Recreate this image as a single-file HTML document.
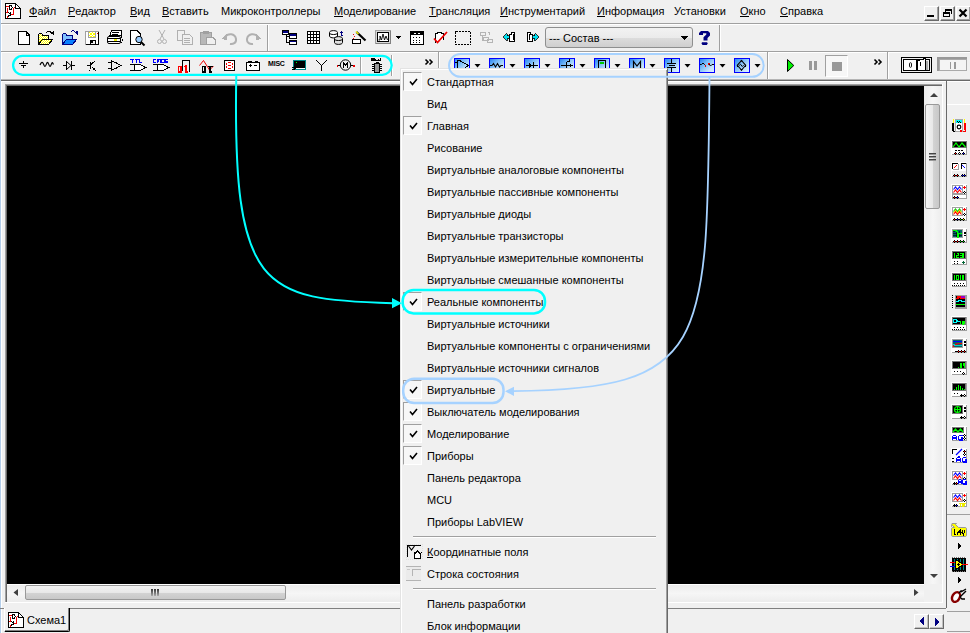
<!DOCTYPE html><html><head><meta charset="utf-8"><style>
*{margin:0;padding:0;box-sizing:border-box}
html,body{width:970px;height:633px;overflow:hidden;background:#f0f0f0;font-family:"Liberation Sans",sans-serif;font-size:11px;color:#000}
.a{position:absolute}
svg{position:absolute;overflow:visible}
.t{position:absolute;white-space:nowrap;line-height:13px}
u{text-decoration:none;position:relative}
u:after{content:"";position:absolute;left:0;right:0;bottom:0px;height:1px;background:#000}
.mdib{position:absolute;top:6px;width:15px;height:15px;background:#f0f0f0;border-top:1px solid #fff;border-left:1px solid #fff;border-right:1px solid #696969;border-bottom:1px solid #696969;box-shadow:inset -1px -1px 0 #a0a0a0}
.mi{position:absolute;left:427px;white-space:nowrap;line-height:13px}
.ck{position:absolute;left:403px;width:19px;height:19px;background:#f7f7f7;border-top:1px solid #a0a0a0;border-left:1px solid #a0a0a0;border-right:1px solid #fff;border-bottom:1px solid #fff}
.vb{position:absolute;top:58px;width:16px;height:15px;border:1px solid #0000ff;background:linear-gradient(135deg,#2a86f0 0%,#80c0f8 40%,#c8e4fc 75%,#dcf0ff 100%)}
</style></head><body>
<div class="a" style="left:0px;top:0px;width:1px;height:633px;background:#b4ceea;"></div>
<div class="a" style="left:1px;top:0px;width:1px;height:633px;background:#fff;"></div>
<svg style="left:5px;top:3px" width="17" height="17" viewBox="0 0 17 17" shape-rendering="crispEdges"><path d="M0.5 0.5H10.5L15.5 5.5V15.5H0.5Z" fill="#fff" stroke="#000"/><path d="M10.5 0.5V5.5H15.5" fill="none" stroke="#000"/><path d="M1 3.5H3.5M2.5 5V9.5H1M8.5 4.5H10M8.5 4.5V11.5H6" fill="none" stroke="#e00"/><path d="M4.5 2.5H6L7.5 4.5L6 6.5H4.5Z" fill="none" stroke="#000"/><path d="M3.5 9.5L6.5 12.5M5.5 9V13M3 13.5L4.5 12" fill="none" stroke="#000"/><path d="M2.5 13V15" stroke="#e00"/></svg>
<div class="t" style="left:29px;top:5px;"><u>Ф</u>айл</div>
<div class="t" style="left:68px;top:5px;"><u>Р</u>едактор</div>
<div class="t" style="left:130px;top:5px;"><u>В</u>ид</div>
<div class="t" style="left:162px;top:5px;"><u>В</u>ставить</div>
<div class="t" style="left:221px;top:5px;">Микроконтроллеры</div>
<div class="t" style="left:334px;top:5px;"><u>М</u>оделирование</div>
<div class="t" style="left:429px;top:5px;"><u>Т</u>рансляция</div>
<div class="t" style="left:500px;top:5px;"><u>И</u>нструментарий</div>
<div class="t" style="left:597px;top:5px;"><u>И</u>нформация</div>
<div class="t" style="left:674px;top:5px;">Установки</div>
<div class="t" style="left:740px;top:5px;"><u>О</u>кно</div>
<div class="t" style="left:780px;top:5px;"><u>С</u>правка</div>
<div class="mdib" style="left:924px"></div>
<div class="mdib" style="left:940px"></div>
<div class="mdib" style="left:956px"></div>
<svg style="left:924px;top:6px" width="15" height="15" viewBox="0 0 15 15" shape-rendering="crispEdges"><rect x="3" y="9" width="7" height="2" fill="#000"/></svg>
<svg style="left:940px;top:6px" width="15" height="15" viewBox="0 0 15 15" shape-rendering="crispEdges"><path d="M5.5 3.5H11.5V7.5M5.5 3.5V5.5" fill="none" stroke="#000"/><rect x="5" y="3" width="7" height="2" fill="#000"/><rect x="3.5" y="6.5" width="6" height="4" fill="none" stroke="#000"/><rect x="3" y="6" width="7" height="2" fill="#000"/></svg>
<svg style="left:956px;top:6px" width="15" height="15" viewBox="0 0 15 15" shape-rendering="crispEdges"><path d="M3.5 3.5L10.5 10.5M10.5 3.5L3.5 10.5" stroke="#000" stroke-width="2.2" shape-rendering="auto"/></svg>
<div class="a" style="left:1px;top:23px;width:969px;height:1px;background:#a0a0a0;"></div>
<div class="a" style="left:1px;top:24px;width:969px;height:1px;background:#fff;"></div>
<div class="a" style="left:1px;top:51px;width:969px;height:1px;background:#a0a0a0;"></div>
<div class="a" style="left:1px;top:52px;width:969px;height:1px;background:#fff;"></div>
<svg style="left:18px;top:31px" width="12" height="14" viewBox="0 0 12 14" shape-rendering="crispEdges"><path d="M0.5 0.5H8L11.5 4V13.5H0.5Z" fill="#fff" stroke="#000"/><path d="M8 1V4H11" fill="none" stroke="#000"/></svg>
<svg style="left:38px;top:30px" width="17" height="16" viewBox="0 0 17 16" shape-rendering="crispEdges"><defs><pattern id="chk" width="2" height="2" patternUnits="userSpaceOnUse"><rect width="2" height="2" fill="#fff"/><rect width="1" height="1" fill="#ff0"/><rect x="1" y="1" width="1" height="1" fill="#ff0"/></pattern></defs><path d="M0.5 14V4.5L1.5 3.5H3.5L4.5 5H10.5V9" fill="url(#chk)" stroke="#000"/><path d="M0.5 14.5L4.5 9H15L10.5 14.5Z" fill="url(#chk)" stroke="#000"/><path d="M0 14.5H11" stroke="#000" stroke-width="1.2"/><path d="M8.5 3C9.5 0.8 11.5 0.5 13 2.5" fill="none" stroke="#000"/><path d="M12 2.5L16 1V5.5Z" fill="#000"/></svg>
<svg style="left:62px;top:30px" width="17" height="16" viewBox="0 0 17 16" shape-rendering="crispEdges"><path d="M0.5 14V4.5L1.5 3.5H3.5L4.5 5H10.5V9" fill="#80c0ff" stroke="#000080"/><path d="M0.5 14.5L4.5 9H15L10.5 14.5Z" fill="#0a80ff" stroke="#000080"/><path d="M0 14.5H11" stroke="#000080" stroke-width="1.2"/><path d="M8.5 2.5C9.5 0.3 11.5 0 13 2" fill="none" stroke="#000080"/><path d="M12 2L16 1V5Z" fill="#000080"/></svg>
<svg style="left:85px;top:31px" width="15" height="14" viewBox="0 0 15 14" shape-rendering="crispEdges"><defs><pattern id="stp" width="3" height="3" patternUnits="userSpaceOnUse"><rect width="3" height="3" fill="#fff"/><path d="M0 0H1V1H0ZM1 1H2V2H1ZM2 2H3V3H2ZM2 0H3V1H2ZM0 2H1V3H0Z" fill="#ff0"/></pattern></defs><rect x="0.5" y="0.5" width="13" height="13" fill="#fff" stroke="#a0a0a0"/><path d="M13.5 1V13.5H1" fill="none" stroke="#000" stroke-width="1.5"/><rect x="3.5" y="0.5" width="7" height="6" fill="url(#stp)" stroke="#a0a0a0"/><rect x="12" y="2" width="1" height="1" fill="#e00"/><rect x="5" y="9" width="5" height="4" fill="#f0f0f0" stroke="#000"/><rect x="6" y="10" width="2" height="2" fill="#000"/></svg>
<svg style="left:107px;top:30px" width="16" height="15" viewBox="0 0 16 15" shape-rendering="crispEdges"><path d="M4.5 0.5H14V5.5H3L3.5 3Z" fill="#fff" stroke="#000"/><path d="M5 2.5H12M5 4H11" stroke="#000"/><rect x="0.5" y="6.5" width="13" height="7" rx="1.5" fill="#fff" stroke="#000" shape-rendering="auto"/><path d="M1 8.5H13M1 11.5H13" stroke="#000"/><rect x="7" y="9" width="3" height="1.5" fill="#ee0"/><path d="M14 6V8M15 9V11M14 12V13" stroke="#000"/></svg>
<svg style="left:130px;top:30px" width="16" height="16" viewBox="0 0 16 16" shape-rendering="crispEdges"><path d="M0.5 0.5H7L10.5 4V14.5H0.5Z" fill="#fff" stroke="#000"/><circle cx="9" cy="9.5" r="3.2" fill="#9cf" stroke="#000" shape-rendering="auto"/><path d="M11 12L14.5 15.5" stroke="#000" stroke-width="2" shape-rendering="auto"/></svg>
<svg style="left:157px;top:30px" width="10" height="15" viewBox="0 0 10 15" shape-rendering="crispEdges"><path d="M2 0L7 9M8 0L3 9" stroke="#b0b0b0" shape-rendering="auto"/><circle cx="2.5" cy="11.5" r="2" fill="none" stroke="#b0b0b0" shape-rendering="auto"/><circle cx="7.5" cy="11.5" r="2" fill="none" stroke="#b0b0b0" shape-rendering="auto"/></svg>
<svg style="left:177px;top:30px" width="16" height="15" viewBox="0 0 16 15" shape-rendering="crispEdges"><path d="M0.5 0.5H7.5V10.5H0.5Z" fill="#f0f0f0" stroke="#b0b0b0"/><path d="M5.5 4.5H12.5L15.5 7.5V14.5H5.5Z" fill="#f0f0f0" stroke="#b0b0b0"/><path d="M7 8H13M7 10H13M7 12H13" stroke="#b0b0b0"/></svg>
<svg style="left:200px;top:30px" width="16" height="15" viewBox="0 0 16 15" shape-rendering="crispEdges"><rect x="0.5" y="2.5" width="11" height="12" fill="#b8b8b8" stroke="#a0a0a0"/><rect x="3" y="1" width="6" height="3" fill="#a0a0a0"/><path d="M6.5 7.5H13L15.5 10V14.5H6.5Z" fill="#f0f0f0" stroke="#a0a0a0"/></svg>
<svg style="left:221px;top:31px" width="17" height="14" viewBox="0 0 17 14" shape-rendering="crispEdges"><path d="M4 6C7 2 14 2 15 8C15.5 12 12 13.5 9 13" fill="none" stroke="#b0b0b0" stroke-width="2" shape-rendering="auto"/><path d="M0 8L6 3V9Z" fill="#b0b0b0"/></svg>
<svg style="left:245px;top:31px" width="17" height="14" viewBox="0 0 17 14" shape-rendering="crispEdges"><path d="M13 6C10 2 3 2 2 8C1.5 12 5 13.5 8 13" fill="none" stroke="#b0b0b0" stroke-width="2" shape-rendering="auto"/><path d="M17 8L11 3V9Z" fill="#b0b0b0"/></svg>
<div class="a" style="left:267px;top:25px;width:1px;height:26px;background:#a0a0a0;"></div>
<div class="a" style="left:268px;top:25px;width:1px;height:26px;background:#fff;"></div>
<svg style="left:282px;top:30px" width="16" height="16" viewBox="0 0 16 16" shape-rendering="crispEdges"><path d="M4.5 5V12.5H8M4.5 6.5H8" fill="none" stroke="#000"/><rect x="0.5" y="0.5" width="6" height="4" fill="#fff" stroke="#000"/><rect x="1" y="1" width="5" height="1.5" fill="#000080"/><rect x="7.5" y="3.5" width="6.5" height="4.5" fill="#fff" stroke="#000"/><rect x="8" y="4" width="5.5" height="1.5" fill="#000080"/><rect x="7.5" y="10" width="6.5" height="4.5" fill="#fff" stroke="#000"/><rect x="8" y="10.5" width="5.5" height="1.5" fill="#000080"/></svg>
<svg style="left:307px;top:31px" width="14" height="14" viewBox="0 0 14 14" shape-rendering="crispEdges"><rect x="0" y="0" width="13" height="13" fill="#000"/><path d="M1 1H3V3H1ZM4 1H6V3H4ZM7 1H9V3H7ZM10 1H12V3H10ZM1 4H3V6H1ZM4 4H6V6H4ZM7 4H9V6H7ZM10 4H12V6H10ZM1 7H3V9H1ZM4 7H6V9H4ZM7 7H9V9H7ZM10 7H12V9H10ZM1 10H3V12H1ZM4 10H6V12H4ZM7 10H9V12H7ZM10 10H12V12H10Z" fill="#fff"/></svg>
<svg style="left:329px;top:30px" width="16" height="16" viewBox="0 0 16 16" shape-rendering="crispEdges"><path d="M0.5 2.5C0.5 0 8.5 0 8.5 2.5V6C8.5 8.5 0.5 8.5 0.5 6Z" fill="#fff" stroke="#000" shape-rendering="auto"/><path d="M0.5 3C0.5 5 8.5 5 8.5 3" fill="none" stroke="#000" shape-rendering="auto"/><path d="M5.5 8.5C5.5 6 13.5 6 13.5 8.5V12.5C13.5 15 5.5 15 5.5 12.5Z" fill="#e0e0e0" stroke="#000" shape-rendering="auto"/><path d="M5.5 9C5.5 11 13.5 11 13.5 9" fill="none" stroke="#000" shape-rendering="auto"/><path d="M12.5 1.5V5.5H14" fill="none" stroke="#000080" stroke-width="1.2"/><path d="M10.5 3L12.5 0.5L14.5 3Z" fill="#000080"/></svg>
<svg style="left:352px;top:30px" width="15" height="15" viewBox="0 0 15 15" shape-rendering="crispEdges"><path d="M1 4H2M2 6H3M1 8H2" stroke="#e00"/><rect x="0.5" y="9.5" width="8" height="4" fill="#fff" stroke="#000"/><path d="M4.5 2L13.5 10.5" stroke="#000" stroke-width="2.2" shape-rendering="auto"/><path d="M4 1.5L6.5 4" stroke="#ee0" stroke-width="1.5" shape-rendering="auto"/></svg>
<svg style="left:375px;top:30px" width="16" height="14" viewBox="0 0 16 14" shape-rendering="crispEdges"><rect x="0.5" y="0.5" width="15" height="13" fill="#d8d8d8" stroke="#a0a0a0"/><path d="M1 13.5H16M15.5 1V14" stroke="#808080"/><rect x="2.5" y="2.5" width="11" height="9" fill="#fff" stroke="#000"/><path d="M3.5 10H5V6L6.5 10L8 4L9.5 10L11 6L12.5 10" fill="none" stroke="#000" stroke-width="0.9" shape-rendering="auto"/></svg>
<svg style="left:395px;top:36px" width="6" height="3" viewBox="0 0 6 3" shape-rendering="crispEdges"><path d="M0 0H6L3 3Z" fill="#000"/></svg>
<svg style="left:410px;top:31px" width="14" height="14" viewBox="0 0 14 14" shape-rendering="crispEdges"><rect x="0.5" y="0.5" width="13" height="12.5" fill="#fff" stroke="#000"/><path d="M13.5 1V13.5H1" fill="none" stroke="#000" stroke-width="1.5"/><rect x="1" y="1" width="12" height="3" fill="#000"/><path d="M4 2.5H6M8 2.5H10" stroke="#fff"/><path d="M3.5 6V7M6.5 6V7M9.5 6V7M3.5 8.5V9.5M6.5 8.5V9.5M9.5 8.5V9.5M3.5 11V12M6.5 11V12M9.5 11V12" stroke="#000"/></svg>
<svg style="left:433px;top:31px" width="15" height="14" viewBox="0 0 15 14" shape-rendering="crispEdges"><path d="M2.5 12V2.5H4V1H8V2.5H10V9" fill="#fff" stroke="#000"/><path d="M1 7.5L4.5 11.5L14 1" fill="none" stroke="#e00" stroke-width="1.8" shape-rendering="auto"/></svg>
<svg style="left:455px;top:31px" width="16" height="14" viewBox="0 0 16 14" shape-rendering="crispEdges"><rect x="0.5" y="0.5" width="15" height="13" fill="none" stroke="#000" stroke-dasharray="2 1"/></svg>
<svg style="left:480px;top:32px" width="13" height="11" viewBox="0 0 13 11" shape-rendering="crispEdges"><path d="M0.5 0.5H5.5V3.5H0.5Z" fill="none" stroke="#b4b4b4"/><path d="M2.5 4V8H5M7.5 0.5H9.5V2.5M3 5.5H8.5V8.5H3ZM7.5 7.5H12.5V10.5H7.5Z" fill="none" stroke="#b4b4b4"/></svg>
<svg style="left:503px;top:32px" width="12" height="10" viewBox="0 0 12 10" shape-rendering="crispEdges"><path d="M0 5L4 1.5V3.5H6.5V6.5H4V8.5Z" fill="#00e0f0" stroke="#000" stroke-width="0.8"/><path d="M6.5 2.5H8.5V0.5H11.5V9.5H6.5Z" fill="#fff" stroke="#000"/><path d="M10 2V8" stroke="#000"/></svg>
<svg style="left:527px;top:32px" width="12" height="10" viewBox="0 0 12 10" shape-rendering="crispEdges"><path d="M0.5 0.5H3.5V2.5H5.5V9.5H0.5Z" fill="#fff" stroke="#000"/><path d="M2 2V8" stroke="#000"/><path d="M11.5 5L7.5 1.5V3.5H5V6.5H7.5V8.5Z" fill="#00e0f0" stroke="#000" stroke-width="0.8"/></svg>
<div class="a" style="left:545px;top:27px;width:148px;height:21px;border:1px solid #8e8f8f;border-radius:3px;background:linear-gradient(#f2f2f2 0%,#ebebeb 50%,#dddddd 51%,#cfcfcf 100%)"></div>
<div class="t" style="left:549px;top:32px;">--- Состав ---</div>
<svg style="left:681px;top:36px" width="7" height="4" viewBox="0 0 7 4" shape-rendering="crispEdges"><path d="M0 0H7L3.5 4Z" fill="#000"/></svg>
<svg style="left:0;top:0" width="720" height="50" viewBox="0 0 720 50"><path d="M699 35V33L701 31H708L710 33V35.5L707.5 38V40.5H703.5V37.2L706.3 34.5V33.3H703V35Z" fill="#000080"/><path d="M702 42.3H707L707.8 43.5L706.8 45H702.5L701.5 43.5Z" fill="#000080"/></svg>
<div class="a" style="left:719px;top:25px;width:1px;height:26px;background:#a0a0a0;"></div>
<div class="a" style="left:720px;top:25px;width:1px;height:26px;background:#fff;"></div>
<div class="a" style="left:360px;top:57px;width:1px;height:17px;background:#a0a0a0;"></div>
<div class="a" style="left:361px;top:57px;width:1px;height:17px;background:#fff;"></div>
<div class="a" style="left:391px;top:55px;width:1px;height:21px;background:#a0a0a0;"></div>
<div class="a" style="left:392px;top:55px;width:1px;height:21px;background:#fff;"></div>
<div class="a" style="left:438px;top:52px;width:1px;height:30px;background:#a0a0a0;"></div>
<div class="a" style="left:439px;top:52px;width:1px;height:30px;background:#fff;"></div>
<div class="a" style="left:767px;top:52px;width:1px;height:30px;background:#a0a0a0;"></div>
<div class="a" style="left:768px;top:52px;width:1px;height:30px;background:#fff;"></div>
<div class="a" style="left:887px;top:52px;width:1px;height:30px;background:#a0a0a0;"></div>
<div class="a" style="left:888px;top:52px;width:1px;height:30px;background:#fff;"></div>
<svg style="left:425px;top:59px" width="9" height="6" viewBox="0 0 9 6" shape-rendering="crispEdges"><path d="M0.5 0.5L3 3L0.5 5.5M4.5 0.5L7 3L4.5 5.5" fill="none" stroke="#000" stroke-width="1.6" shape-rendering="auto"/></svg>
<svg style="left:874px;top:59px" width="9" height="6" viewBox="0 0 9 6" shape-rendering="crispEdges"><path d="M0.5 0.5L3 3L0.5 5.5M4.5 0.5L7 3L4.5 5.5" fill="none" stroke="#000" stroke-width="1.6" shape-rendering="auto"/></svg>
<svg style="left:0;top:0" width="970" height="90" viewBox="0 0 970 90" shape-rendering="crispEdges">
<path d="M19 63.5H28M21 65.5H26M23.5 61V63M23.5 66V68" stroke="#000" fill="none"/>
<path d="M40 65C41 63 41.5 62 42.5 62.5C43.5 63 44 66.5 45 66.5C46 66.5 46.5 62.3 47.5 62.3C48.5 62.3 49 66.5 50 66.5C51 66.5 51.5 62.5 52.3 62.5C52.8 62.5 53 64 53.5 64.5" fill="none" stroke="#000" stroke-width="1.2" shape-rendering="auto"/>
<path d="M63 65.5H66M71 65.5H75M66.5 61V70M71.5 61V70" fill="none" stroke="#000"/><path d="M66.5 61.5L71 65.5L66.5 69.5" fill="none" stroke="#000" shape-rendering="auto"/>
<path d="M87 65.5H90M90.5 62V69M91 64.5L95 61M92 67L95.5 70.5" fill="none" stroke="#000"/>
<path d="M95.5 70.5L92.5 69.5L94.5 67.5Z" fill="#000"/><rect x="89" y="70" width="1" height="1" fill="#000"/>
<path d="M108 62.5H111M108 68.5H111M111.5 60V71M112 61L121 65.5L112 70M121 65.5H122M116.5 62V64M116.5 67V69" fill="none" stroke="#000"/>
<path d="M130 64.5H134M130 70.5H134M134.5 64.5H140L145.5 67.5L140 70.5H134.5Z" fill="#fff" stroke="#000"/>
<path d="M153 64.5H157M153 70.5H157M157.5 64.5H163L168.5 67.5L163 70.5H157.5Z" fill="#fff" stroke="#000"/>
<path d="M182.5 71V60.5H189.5V71.5" fill="none" stroke="#000"/>
<path d="M199.5 65.5L203.5 60.5L209.5 70L213.5 66" fill="none" stroke="#e00" shape-rendering="auto"/>
<rect x="224.5" y="60.5" width="10" height="10" fill="#fff" stroke="#000"/>
<path d="M228 62.5H231M228 65.5H231M228 68.5H231M226.5 63V65M232.5 63V65M226.5 66V68M232.5 66V68" stroke="#e00"/>
<rect x="246.5" y="62.5" width="13" height="8" fill="#fff" stroke="#000"/><path d="M248 61.5H252M255 61.5H258M249 65.5H252M250.5 64V67M254 65.5H257" stroke="#000"/>
<rect x="293.5" y="60.5" width="12" height="9" fill="#000" stroke="#088"/><rect x="296" y="62" width="1" height="1" fill="#0f0"/><path d="M296 68.5H305" stroke="#fff"/><path d="M292 67.5H294M292 69.5H295" stroke="#000"/>
<path d="M316 60L321.5 65.5L327 60M321.5 65V71" fill="none" stroke="#000" stroke-width="1.1"/>
<circle cx="345.5" cy="65" r="5.2" fill="none" stroke="#000" shape-rendering="auto"/><path d="M337 65.5H340M351 65.5H354M343.5 68V62.5L345.5 65L347.5 62.5V68" fill="none" stroke="#000"/>
<rect x="336.5" y="64.5" width="1.5" height="2" fill="#e00"/><rect x="353" y="64.5" width="1.5" height="2" fill="#e00"/>
<path d="M371.5 61V58.5H374.5V61M373 58.5V60.5M375.5 58.5V60.5H377.5M378.5 58.5V60.5H380.5V58" fill="none" stroke="#000" stroke-width="1.2"/><rect x="374.5" y="63.5" width="5" height="9" fill="#999" stroke="#000"/><path d="M376 62.5H378.5" stroke="#000"/>
<path d="M372 64.5H374M372 66.5H374M372 68.5H374M372 70.5H374M380 64.5H382M380 66.5H382M380 68.5H382M380 70.5H382" stroke="#000"/>
</svg>
<svg style="left:0;top:0" width="400" height="80" viewBox="0 0 400 80" shape-rendering="crispEdges"><path d="M130 59.5H134M132 60V63M134.5 59.5H138.5M136.5 60V63M139.5 59V62.5H142" fill="none" stroke="#00f"/><path d="M156 59.5H153.5V62.5H156M157 63V59.5H160V63M158.5 60V62M161.5 59.5H164V62.5H161.5ZM168 59.5H165.5V61H167.5V62.5H165" fill="none" stroke="#00f"/><path d="M178.5 66.5H181V72H178.5Z" fill="none" stroke="#f00" stroke-width="1.6"/><path d="M184.5 67L186 66V72M184.5 72H188" fill="none" stroke="#f00" stroke-width="1.6"/><path d="M202.5 66.5H205V72H202.5Z" fill="none" stroke="#000" stroke-width="1.6"/><path d="M207.5 66.5H212.5M210 66.5V72M208.5 72H211.5" fill="none" stroke="#000" stroke-width="1.6"/></svg>
<div class="t" style="left:268px;top:59px;font-size:7px;font-weight:bold;letter-spacing:-0.2px;line-height:9px">MISC</div>
<div class="vb" style="left:454px"></div>
<svg style="left:454px;top:58px" width="16" height="15" viewBox="0 0 16 15" shape-rendering="crispEdges"><path d="M3.5 2V15M1 4.5H3.5M4 2.5H5.5L14.5 7.5M10 10.5L14.5 7.5M13 7.5H15" fill="none" stroke="#000"/></svg>
<svg style="left:474px;top:64px" width="7" height="4" viewBox="0 0 7 4" shape-rendering="crispEdges"><path d="M0.5 0H6.5L3.5 3.5Z" fill="#000" shape-rendering="auto"/></svg>
<div class="vb" style="left:489px"></div>
<svg style="left:489px;top:58px" width="16" height="15" viewBox="0 0 16 15" shape-rendering="crispEdges"><path d="M1 7.5H3L4.5 5.5L6.5 9L8.5 5.5L10.5 9L12 7.5H14" fill="none" stroke="#000" stroke-width="1.1" shape-rendering="auto"/></svg>
<svg style="left:509px;top:64px" width="7" height="4" viewBox="0 0 7 4" shape-rendering="crispEdges"><path d="M0.5 0H6.5L3.5 3.5Z" fill="#000" shape-rendering="auto"/></svg>
<div class="vb" style="left:524px"></div>
<svg style="left:524px;top:58px" width="16" height="15" viewBox="0 0 16 15" shape-rendering="crispEdges"><path d="M2 7.5H14M9.5 4V14" stroke="#000"/><path d="M4.5 4.5L8.5 7.5L4.5 10.5Z" fill="#000"/></svg>
<svg style="left:544px;top:64px" width="7" height="4" viewBox="0 0 7 4" shape-rendering="crispEdges"><path d="M0.5 0H6.5L3.5 3.5Z" fill="#000" shape-rendering="auto"/></svg>
<div class="vb" style="left:559px"></div>
<svg style="left:559px;top:58px" width="16" height="15" viewBox="0 0 16 15" shape-rendering="crispEdges"><path d="M2 7.5H14M7.5 4V14M7.5 3.5H10.5M10.5 1V4" stroke="#000" fill="none"/><path d="M12 5.5L9 7.5L12 9.5Z" fill="#000"/></svg>
<svg style="left:579px;top:64px" width="7" height="4" viewBox="0 0 7 4" shape-rendering="crispEdges"><path d="M0.5 0H6.5L3.5 3.5Z" fill="#000" shape-rendering="auto"/></svg>
<div class="vb" style="left:594px"></div>
<svg style="left:594px;top:58px" width="16" height="15" viewBox="0 0 16 15" shape-rendering="crispEdges"><rect x="4.5" y="2.5" width="7" height="10" fill="none" stroke="#000"/><rect x="6" y="4" width="4" height="2" fill="#0c0"/><path d="M6 10H7M9 10H10" stroke="#000"/></svg>
<svg style="left:614px;top:64px" width="7" height="4" viewBox="0 0 7 4" shape-rendering="crispEdges"><path d="M0.5 0H6.5L3.5 3.5Z" fill="#000" shape-rendering="auto"/></svg>
<div class="vb" style="left:629px"></div>
<svg style="left:629px;top:58px" width="16" height="15" viewBox="0 0 16 15" shape-rendering="crispEdges"><path d="M4.5 12V3.5L8 8L11.5 3.5V12" fill="none" stroke="#000" stroke-width="1.2" shape-rendering="auto"/></svg>
<svg style="left:649px;top:64px" width="7" height="4" viewBox="0 0 7 4" shape-rendering="crispEdges"><path d="M0.5 0H6.5L3.5 3.5Z" fill="#000" shape-rendering="auto"/></svg>
<div class="vb" style="left:664px"></div>
<svg style="left:664px;top:58px" width="16" height="15" viewBox="0 0 16 15" shape-rendering="crispEdges"><path d="M3 5.5H12M4.5 7.5H10.5M3 9.5H12M7.5 1V5M7.5 10V14" stroke="#000"/></svg>
<svg style="left:684px;top:64px" width="7" height="4" viewBox="0 0 7 4" shape-rendering="crispEdges"><path d="M0.5 0H6.5L3.5 3.5Z" fill="#000" shape-rendering="auto"/></svg>
<div class="vb" style="left:699px"></div>
<svg style="left:699px;top:58px" width="16" height="15" viewBox="0 0 16 15" shape-rendering="crispEdges"><path d="M1 6.5H2.5L4 5L5.5 6.5L7 8" fill="none" stroke="#000" shape-rendering="auto"/><rect x="5.5" y="7" width="1.5" height="1.5" fill="#e00"/><rect x="9" y="5" width="1.5" height="1.5" fill="#e00"/><path d="M10 6L11.5 8L13 6.5H15" fill="none" stroke="#000" shape-rendering="auto"/></svg>
<svg style="left:719px;top:64px" width="7" height="4" viewBox="0 0 7 4" shape-rendering="crispEdges"><path d="M0.5 0H6.5L3.5 3.5Z" fill="#000" shape-rendering="auto"/></svg>
<div class="vb" style="left:734px"></div>
<svg style="left:734px;top:58px" width="16" height="15" viewBox="0 0 16 15" shape-rendering="crispEdges"><path d="M7.5 2.5L11.7 7.3L7.5 12L3.3 7.3Z" fill="none" stroke="#000" stroke-width="1.1" shape-rendering="auto"/><path d="M3.5 6.5V8.5M11.5 6.5V8.5" stroke="#000" stroke-width="1.2"/><path d="M5.2 7.5L6.5 6.3L8.3 8.5L9.6 7.2" fill="none" stroke="#000" shape-rendering="auto"/><path d="M6 3.5H9L7.5 1.8ZM6 11.2H9L7.5 13Z" fill="#000" shape-rendering="auto"/></svg>
<svg style="left:754px;top:64px" width="7" height="4" viewBox="0 0 7 4" shape-rendering="crispEdges"><path d="M0.5 0H6.5L3.5 3.5Z" fill="#000" shape-rendering="auto"/></svg>
<svg style="left:787px;top:59px" width="8" height="13" viewBox="0 0 8 13" shape-rendering="crispEdges"><path d="M0.5 0.5L6.8 6.5L0.5 12.5Z" fill="#00f000" stroke="#000" shape-rendering="auto"/></svg>
<svg style="left:809px;top:61px" width="9" height="10" viewBox="0 0 9 10" shape-rendering="crispEdges"><rect x="0" y="0" width="3" height="9" fill="#999"/><rect x="5" y="0" width="3" height="9" fill="#999"/></svg>
<div class="a" style="left:825px;top:55px;width:23px;height:22px;background:#f7f7f7;border-top:1px solid #a0a0a0;border-left:1px solid #a0a0a0;border-right:1px solid #fff;border-bottom:1px solid #fff"></div>
<div class="a" style="left:832px;top:62px;width:10px;height:9px;background:#999;"></div>
<svg style="left:901px;top:57px" width="32" height="16" viewBox="0 0 32 16" shape-rendering="crispEdges"><rect x="0.5" y="0.5" width="30" height="15" fill="#f0f0f0" stroke="#000"/><rect x="2.5" y="2.5" width="26" height="11" fill="none" stroke="#000"/><rect x="3" y="3" width="12" height="10" fill="#fff"/><path d="M15.5 3V13" stroke="#000"/><path d="M8.5 6.5C8.5 5.5 10.5 5.5 10.5 6.5V9.5C10.5 10.5 8.5 10.5 8.5 9.5Z" fill="none" stroke="#000" stroke-width="0.9" shape-rendering="auto"/><path d="M16.5 3.5L24.5 1.5V13.5H16.5Z" fill="#fff" stroke="#000"/><path d="M19.5 5V9" stroke="#000" stroke-width="1.2"/><path d="M26 4V13" stroke="#aaa" stroke-width="1.5"/><path d="M1 15.5H31M30.5 1V16" stroke="#000"/></svg>
<svg style="left:937px;top:57px" width="31" height="15" viewBox="0 0 31 15" shape-rendering="crispEdges"><rect x="0" y="0" width="30" height="14" fill="#f0f0f0"/><rect x="0" y="0" width="30" height="2" fill="#999"/><rect x="0" y="0" width="2" height="14" fill="#999"/><rect x="2.5" y="2.5" width="27" height="11" fill="#f4f4f4" stroke="#aaa"/><path d="M13.5 5V11.5M18 5V11.5" stroke="#999" stroke-width="1.3"/></svg>
<div class="a" style="left:1px;top:79px;width:969px;height:1px;background:#b4b4b4;"></div>
<div class="a" style="left:1px;top:80px;width:969px;height:1px;background:#696969;"></div>
<div class="a" style="left:1px;top:81px;width:969px;height:1px;background:#fff;"></div>
<div class="a" style="left:5px;top:84px;width:937px;height:1px;background:#a0a0a0;"></div>
<div class="a" style="left:6px;top:85px;width:936px;height:1px;background:#696969;"></div>
<div class="a" style="left:5px;top:84px;width:1px;height:518px;background:#a0a0a0;"></div>
<div class="a" style="left:6px;top:85px;width:1px;height:517px;background:#696969;"></div>
<div class="a" style="left:7px;top:86px;width:917px;height:498px;background:#000;"></div>
<div class="a" style="left:924px;top:86px;width:18px;height:498px;background:#f0f0f0;background:linear-gradient(90deg,#ececec,#f6f6f6 50%,#ececec)"></div>
<svg style="left:930px;top:92px" width="8" height="5" viewBox="0 0 8 5" shape-rendering="crispEdges"><path d="M0 5L4 1L8 5Z" fill="#404040" shape-rendering="auto"/></svg>
<div class="a" style="left:925px;top:104px;width:15px;height:105px;border:1px solid #999;border-radius:2px;background:linear-gradient(90deg,#f4f4f4,#e8e8e8 50%,#d4d4d4 51%,#c8c8c8)"></div>
<svg style="left:929px;top:153px" width="7" height="8" viewBox="0 0 7 8" shape-rendering="crispEdges"><path d="M0 0.5H7M0 3.5H7M0 6.5H7" stroke="#444"/><path d="M0 1.5H7M0 4.5H7M0 7.5H7" stroke="#999"/></svg>
<svg style="left:930px;top:574px" width="8" height="4" viewBox="0 0 8 4" shape-rendering="crispEdges"><path d="M0 0H8L4 4Z" fill="#404040" shape-rendering="auto"/></svg>
<div class="a" style="left:7px;top:584px;width:917px;height:1px;background:#fff;"></div>
<div class="a" style="left:7px;top:585px;width:917px;height:17px;background:#f0f0f0;background:linear-gradient(#ececec,#f6f6f6 50%,#ececec)"></div>
<svg style="left:13px;top:589px" width="5" height="7" viewBox="0 0 5 7" shape-rendering="crispEdges"><path d="M5 0L0.5 3.5L5 7Z" fill="#404040" shape-rendering="auto"/></svg>
<svg style="left:914px;top:589px" width="5" height="7" viewBox="0 0 5 7" shape-rendering="crispEdges"><path d="M0 0L4.5 3.5L0 7Z" fill="#404040" shape-rendering="auto"/></svg>
<div class="a" style="left:25px;top:585px;width:261px;height:15px;border:1px solid #999;border-radius:2px;background:linear-gradient(#f4f4f4,#e8e8e8 50%,#d4d4d4 51%,#c8c8c8)"></div>
<svg style="left:151px;top:589px" width="8" height="7" viewBox="0 0 8 7" shape-rendering="crispEdges"><defs><linearGradient id="gg" x1="0" y1="0" x2="0" y2="1"><stop offset="0" stop-color="#333"/><stop offset="1" stop-color="#aaa"/></linearGradient></defs><rect x="0" y="0" width="2" height="7" fill="url(#gg)"/><rect x="3" y="0" width="2" height="7" fill="url(#gg)"/><rect x="6" y="0" width="2" height="7" fill="url(#gg)"/></svg>
<div class="a" style="left:924px;top:584px;width:18px;height:18px;background:#f0f0f0;"></div>
<div class="a" style="left:942px;top:84px;width:1px;height:519px;background:#fff;"></div>
<div class="a" style="left:5px;top:602px;width:938px;height:1px;background:#fff;"></div>
<div class="a" style="left:946px;top:80px;width:1px;height:528px;background:#696969;"></div>
<div class="a" style="left:0px;top:608px;width:5px;height:1px;background:#808080;"></div>
<div class="a" style="left:69px;top:608px;width:877px;height:1px;background:#808080;"></div>
<div class="a" style="left:4px;top:608px;width:66px;height:24px;border-left:1px solid #fff;border-right:1px solid #000;border-bottom:1px solid #000;box-shadow:inset -1px -1px 0 #808080;border-bottom-right-radius:2px"></div>
<svg style="left:8px;top:612px" width="16" height="16" viewBox="0 0 16 16" shape-rendering="crispEdges"><path d="M0.5 0.5H10.5L15.5 5.5V15.5H0.5Z" fill="#fff" stroke="#000"/><path d="M10.5 0.5V5.5H15.5" fill="none" stroke="#000"/><path d="M1 3.5H3.5M2.5 5V9.5H1M8.5 4.5H10M8.5 4.5V11.5H6" fill="none" stroke="#e00"/><path d="M4.5 2.5H6L7.5 4.5L6 6.5H4.5Z" fill="none" stroke="#000"/><path d="M3.5 9.5L6.5 12.5M5.5 9V13M3 13.5L4.5 12" fill="none" stroke="#000"/><path d="M2.5 13V15" stroke="#e00"/></svg>
<div class="t" style="left:27px;top:614px;">Схема1</div>
<div class="a" style="left:914px;top:614px;width:15px;height:15px;border-top:1px solid #fff;border-left:1px solid #fff;border-right:1px solid #696969;border-bottom:1px solid #696969;box-shadow:inset -1px -1px 0 #c0c0c0"></div>
<div class="a" style="left:929px;top:614px;width:15px;height:15px;border-top:1px solid #fff;border-left:1px solid #fff;border-right:1px solid #696969;border-bottom:1px solid #696969;box-shadow:inset -1px -1px 0 #c0c0c0"></div>
<svg style="left:919px;top:617px" width="5" height="8" viewBox="0 0 5 8" shape-rendering="crispEdges"><path d="M4.5 0L0 4L4.5 8Z" fill="#000080"/></svg>
<svg style="left:935px;top:618px" width="5" height="8" viewBox="0 0 5 8" shape-rendering="crispEdges"><path d="M0 0L4.5 4L0 8Z" fill="#000080"/></svg>
<div class="a" style="left:947px;top:611px;width:23px;height:1px;background:#a0a0a0;"></div>
<div class="a" style="left:947px;top:631px;width:23px;height:1px;background:#a0a0a0;"></div>
<div class="a" style="left:947px;top:104px;width:23px;height:1px;background:#fff;"></div>
<svg style="left:951px;top:118px" width="17" height="16" viewBox="0 0 17 16" shape-rendering="crispEdges"><rect x="2" y="1" width="1" height="4" fill="#ff0"/><rect x="13" y="1" width="1" height="4" fill="#ff0"/><rect x="1" y="5" width="2" height="7" fill="#000"/><rect x="13" y="5" width="2" height="7" fill="#f00"/><path d="M1.5 12L3 13.5H5L6 12" fill="none" stroke="#000"/><path d="M10 12.5L12 13.5H14L15 12" fill="none" stroke="#f00"/><rect x="4.5" y="1.5" width="7" height="12" fill="#fff" stroke="#aaa"/><rect x="5" y="2" width="6" height="3" fill="#0ff"/><path d="M6 3H7M8 3H9M7 4H8M9 4H10" stroke="#000"/><circle cx="8" cy="9" r="1.8" fill="#fff" stroke="#000" stroke-width="1.2" shape-rendering="auto"/><rect x="9" y="12" width="2" height="2" fill="#f00"/></svg>
<svg style="left:951px;top:140px" width="17" height="16" viewBox="0 0 17 16" shape-rendering="crispEdges"><rect x="0" y="0" width="16" height="15" fill="#fff"/><path d="M15.5 1V15M1 14.5H16" stroke="#a0a0a0"/><rect x="1.5" y="1.5" width="14" height="6" fill="#000" stroke="#777"/><path d="M2 7L5 3L8 7L11 3L14.5 7" fill="none" stroke="#0f0" stroke-width="1.2" shape-rendering="auto"/><path d="M4 10.5H6M7 10.5H9M10 10.5H12" stroke="#000"/><path d="M4 12H5V13H6V14H5V15H4V14H3V13H4Z" fill="#000"/><rect x="4" y="13" width="1" height="1" fill="#f00"/><path d="M8 12H9V13H10V14H9V15H8V14H7V13H8Z" fill="#000"/><rect x="8" y="13" width="1" height="1" fill="#fff"/><path d="M12 12H13V13H14V14H13V15H12V14H11V13H12Z" fill="#000"/><rect x="12" y="13" width="1" height="1" fill="#00f"/></svg>
<svg style="left:951px;top:162px" width="17" height="16" viewBox="0 0 17 16" shape-rendering="crispEdges"><rect x="0" y="0" width="16" height="15" fill="#fff"/><path d="M15.5 1V15M1 14.5H16" stroke="#a0a0a0"/><path d="M1.5 7V1.5H7" fill="none" stroke="#000"/><path d="M7.5 2V7.5H2" fill="none" stroke="#a0a0a0"/><path d="M3 6L6 3" stroke="#f00" stroke-dasharray="1 0.5"/><path d="M10.5 7V1.5H15" fill="none" stroke="#000"/><path d="M11 3L14 6" stroke="#00f" stroke-dasharray="1 0.5"/><rect x="1" y="9" width="14" height="4" fill="#eee"/><path d="M2 13.5H6M11 13.5H14" stroke="#000"/><path d="M3 12H4V13H5V14H4V15H3V14H2V13H3Z" fill="#000"/><rect x="3" y="13" width="1" height="1" fill="#f00"/><path d="M6 12H7V13H8V14H7V15H6V14H5V13H6Z" fill="#000"/><rect x="6" y="13" width="1" height="1" fill="#f00"/><path d="M11 12H12V13H13V14H12V15H11V14H10V13H11Z" fill="#000"/><rect x="11" y="13" width="1" height="1" fill="#00f"/><path d="M13 12H14V13H15V14H14V15H13V14H12V13H13Z" fill="#000"/><rect x="13" y="13" width="1" height="1" fill="#00f"/></svg>
<svg style="left:951px;top:184px" width="17" height="16" viewBox="0 0 17 16" shape-rendering="crispEdges"><rect x="0" y="0" width="16" height="15" fill="#fff"/><path d="M15.5 1V15M1 14.5H16" stroke="#a0a0a0"/><rect x="1.5" y="1.5" width="10" height="8" fill="#fff" stroke="#a0a0a0"/><path d="M2.5 5.5 L4.5 3 L6.5 5.5 L8.5 3 L10.5 5.5" fill="none" stroke="#00f" stroke-width="1.1" shape-rendering="auto"/><path d="M2.5 8.5 L4.5 6 L6.5 8.5 L8.5 6 L10.5 8.5" fill="none" stroke="#f00" stroke-width="1.1" shape-rendering="auto"/><path d="M12 3.5H15M13.5 2V5" stroke="#f00" stroke-width="1.5"/><path d="M13.5 6.5V9.5M12 8H15" stroke="#000"/><rect x="13" y="7.5" width="1" height="1" fill="#fff"/><rect x="1.5" y="10.5" width="14" height="4" fill="#fff" stroke="#a0a0a0"/><path d="M3 13.5H6" stroke="#000"/><path d="M3 12H4V13H5V14H4V15H3V14H2V13H3Z" fill="#000"/><rect x="3" y="13" width="1" height="1" fill="#f00"/><path d="M6 12H7V13H8V14H7V15H6V14H5V13H6Z" fill="#000"/><rect x="6" y="13" width="1" height="1" fill="#00f"/></svg>
<svg style="left:951px;top:206px" width="17" height="16" viewBox="0 0 17 16" shape-rendering="crispEdges"><rect x="0" y="0" width="16" height="15" fill="#fff"/><path d="M15.5 1V15M1 14.5H16" stroke="#a0a0a0"/><rect x="1.5" y="1.5" width="10" height="8" fill="#fff" stroke="#a0a0a0"/><path d="M2.5 5.5 L4.5 3 L6.5 5.5 L8.5 3 L10.5 5.5" fill="none" stroke="#0c0" stroke-width="1.1" shape-rendering="auto"/><path d="M2.5 7.0 L4.5 4.5 L6.5 7.0 L8.5 4.5 L10.5 7.0" fill="none" stroke="#fc0" stroke-width="1.1" shape-rendering="auto"/><path d="M2.5 8.5 L4.5 6 L6.5 8.5 L8.5 6 L10.5 8.5" fill="none" stroke="#f00" stroke-width="1.1" shape-rendering="auto"/><path d="M12 3.5H15M13.5 2V5" stroke="#f00" stroke-width="1.5"/><path d="M13.5 6.5V9.5M12 8H15" stroke="#000"/><rect x="13" y="7.5" width="1" height="1" fill="#fff"/><path d="M3 13.5H13" stroke="#000"/><path d="M3 12H4V13H5V14H4V15H3V14H2V13H3Z" fill="#000"/><rect x="3" y="13" width="1" height="1" fill="#f00"/><path d="M6 12H7V13H8V14H7V15H6V14H5V13H6Z" fill="#000"/><rect x="6" y="13" width="1" height="1" fill="#00f"/><path d="M9 12H10V13H11V14H10V15H9V14H8V13H9Z" fill="#000"/><rect x="9" y="13" width="1" height="1" fill="#0c0"/><path d="M12 12H13V13H14V14H13V15H12V14H11V13H12Z" fill="#000"/><rect x="12" y="13" width="1" height="1" fill="#ee0"/></svg>
<svg style="left:951px;top:228px" width="17" height="16" viewBox="0 0 17 16" shape-rendering="crispEdges"><rect x="0" y="0" width="16" height="15" fill="#fff"/><path d="M15.5 1V15M1 14.5H16" stroke="#a0a0a0"/><rect x="1.5" y="1.5" width="10" height="8" fill="#066" stroke="#a0a0a0"/><path d="M2 3H4M5 3V9M8 3V9M2 5H11M2 7H11" stroke="#000" stroke-width="0.6"/><path d="M2 2.5H5L7 5V9.5M7 5.5H11" fill="none" stroke="#0f0" stroke-width="1.2"/><rect x="13" y="4" width="2" height="1.5" fill="#000"/><rect x="13" y="6.5" width="2" height="1.5" fill="#000"/><path d="M3 13.5H13" stroke="#000"/><path d="M3 12H4V13H5V14H4V15H3V14H2V13H3Z" fill="#000"/><rect x="3" y="13" width="1" height="1" fill="#f00"/><path d="M6 12H7V13H8V14H7V15H6V14H5V13H6Z" fill="#000"/><rect x="6" y="13" width="1" height="1" fill="#f00"/><path d="M9 12H10V13H11V14H10V15H9V14H8V13H9Z" fill="#000"/><rect x="9" y="13" width="1" height="1" fill="#0c0"/><path d="M12 12H13V13H14V14H13V15H12V14H11V13H12Z" fill="#000"/><rect x="12" y="13" width="1" height="1" fill="#0c0"/></svg>
<svg style="left:951px;top:250px" width="17" height="16" viewBox="0 0 17 16" shape-rendering="crispEdges"><rect x="0" y="0" width="16" height="15" fill="#fff"/><path d="M15.5 1V15M1 14.5H16" stroke="#a0a0a0"/><rect x="1.5" y="1.5" width="13" height="7" fill="#000" stroke="#777"/><path d="M3.5 3V7.5M5.5 3H7.5V5H5.5V7.5H7.5M9 3H11V7.5H9M9 5.2H11" fill="none" stroke="#0f0"/><path d="M12.5 3V7.5" stroke="#0f0"/><path d="M3 11H4M6 11H7M3 13H4M6 13H7" stroke="#000"/><path d="M11 12H14M12.5 10.5V13.5" stroke="#063"/></svg>
<svg style="left:951px;top:272px" width="17" height="16" viewBox="0 0 17 16" shape-rendering="crispEdges"><rect x="0" y="0" width="16" height="15" fill="#fff"/><path d="M15.5 1V15M1 14.5H16" stroke="#a0a0a0"/><rect x="1.5" y="1.5" width="13" height="7" fill="#000" stroke="#777"/><path d="M3.5 3V7.5M5.5 3H7V7.5H5.5ZM9 3V7.5M11 3H12.5V7.5H11Z" fill="none" stroke="#0f0"/><path d="M3 11H4M6 11H7M9 11H10M12 11H13" stroke="#000"/><path d="M1 13.5H15" stroke="#000" stroke-dasharray="1 1"/></svg>
<svg style="left:951px;top:294px" width="17" height="16" viewBox="0 0 17 16" shape-rendering="crispEdges"><rect x="1" y="0" width="15" height="15" fill="#f0f0f0"/><path d="M1.5 1V14" stroke="#000" stroke-dasharray="1 1"/><rect x="4" y="1" width="11" height="13" fill="#a0a0a0"/><rect x="5" y="2" width="9" height="11" fill="#000"/><path d="M5 4.5H7V3H10V4.5H14" fill="none" stroke="#f00" stroke-width="1.5"/><rect x="10" y="2" width="4" height="2" fill="#90c"/><path d="M5 7.5H7V6.5H10V7.5H14" fill="none" stroke="#0ff"/><path d="M5 10.5H14M7 9.5V10.5M11 9.5V10.5" fill="none" stroke="#0f0"/><path d="M4 14.5H15M15.5 1V15" stroke="#a0a0a0"/></svg>
<svg style="left:951px;top:316px" width="17" height="16" viewBox="0 0 17 16" shape-rendering="crispEdges"><rect x="0" y="0" width="16" height="15" fill="#fff"/><path d="M15.5 1V15M1 14.5H16" stroke="#a0a0a0"/><rect x="1.5" y="1.5" width="13" height="7" fill="#000" stroke="#777"/><path d="M2 3.5H5L6.5 5L5 6.5H2V3.5M6.5 5H9" fill="none" stroke="#0ff"/><path d="M9.5 5V8M11.5 5H12.5V8H11.5ZM13.5 5V8" fill="none" stroke="#0f0"/><path d="M3 11H4M6 11H7M9 11H10M12 11H13" stroke="#000"/><path d="M1 13.5H15" stroke="#000" stroke-dasharray="1 1"/></svg>
<svg style="left:951px;top:338px" width="17" height="16" viewBox="0 0 17 16" shape-rendering="crispEdges"><rect x="0" y="0" width="16" height="15" fill="#fff"/><path d="M15.5 1V15M1 14.5H16" stroke="#a0a0a0"/><rect x="1.5" y="1.5" width="10" height="8" fill="#066" stroke="#a0a0a0"/><path d="M2 3.5H11" stroke="#00f" stroke-width="1.2"/><path d="M2 9C4 6 6 5.5 11 5.5" stroke="#f00" fill="none" stroke-width="1.2" shape-rendering="auto"/><path d="M2 6.5L5 7.5H11" stroke="#0cc" fill="none"/><rect x="13" y="3" width="2" height="1.5" fill="#000"/><rect x="13" y="6" width="2" height="1.5" fill="#000"/><path d="M4 13.5H14" stroke="#000"/><path d="M7 12H8V13H9V14H8V15H7V14H6V13H7Z" fill="#000"/><rect x="7" y="13" width="1" height="1" fill="#f00"/><path d="M10 12H11V13H12V14H11V15H10V14H9V13H10Z" fill="#000"/><rect x="10" y="13" width="1" height="1" fill="#f00"/><path d="M13 12H14V13H15V14H14V15H13V14H12V13H13Z" fill="#000"/><rect x="13" y="13" width="1" height="1" fill="#f00"/></svg>
<svg style="left:951px;top:360px" width="17" height="16" viewBox="0 0 17 16" shape-rendering="crispEdges"><rect x="0" y="0" width="16" height="15" fill="#fff"/><path d="M15.5 1V15M1 14.5H16" stroke="#a0a0a0"/><rect x="1.5" y="1.5" width="13" height="7" fill="#000" stroke="#777"/><rect x="7" y="7" width="1" height="1" fill="#0f0"/><path d="M9 3.5H10.5V7.5H9ZM12 3V5.5H14M13.5 3V7.5" fill="none" stroke="#0f0"/><path d="M3 11H4M6 11H7M9 11H10" stroke="#000"/><path d="M12 12H13V13H14V14H13V15H12V14H11V13H12Z" fill="#000"/><rect x="12" y="13" width="1" height="1" fill="#fff"/></svg>
<svg style="left:951px;top:382px" width="17" height="16" viewBox="0 0 17 16" shape-rendering="crispEdges"><rect x="0" y="0" width="16" height="15" fill="#fff"/><path d="M15.5 1V15M1 14.5H16" stroke="#a0a0a0"/><rect x="1.5" y="1.5" width="13" height="7" fill="#000" stroke="#777"/><path d="M3.5 8V6.5M5.5 8V5M7.5 8V2.5M9.5 8V4M11.5 8V5.5M13.5 8V7" stroke="#0f0"/><path d="M3 11H4M6 11H7" stroke="#000"/><path d="M10 12H11V13H12V14H11V15H10V14H9V13H10Z" fill="#000"/><rect x="10" y="13" width="1" height="1" fill="#fff"/><path d="M13 12H14V13H15V14H14V15H13V14H12V13H13Z" fill="#000"/><rect x="13" y="13" width="1" height="1" fill="#fff"/><path d="M10 13.5H13" stroke="#000"/></svg>
<svg style="left:951px;top:404px" width="17" height="16" viewBox="0 0 17 16" shape-rendering="crispEdges"><rect x="0" y="0" width="16" height="15" fill="#fff"/><path d="M15.5 1V15M1 14.5H16" stroke="#a0a0a0"/><rect x="1.5" y="1.5" width="10" height="8" fill="#000" stroke="#777"/><circle cx="6.5" cy="5.5" r="3" fill="none" stroke="#0f0" stroke-width="1.2" shape-rendering="auto"/><path d="M3.5 5.5H9.5M6.5 2.5V8.5" stroke="#0f0"/><rect x="13" y="3" width="2" height="1.5" fill="#000"/><rect x="13" y="6" width="2" height="1.5" fill="#000"/><path d="M10 12H11V13H12V14H11V15H10V14H9V13H10Z" fill="#000"/><rect x="10" y="13" width="1" height="1" fill="#fff"/><path d="M13 12H14V13H15V14H14V15H13V14H12V13H13Z" fill="#000"/><rect x="13" y="13" width="1" height="1" fill="#fff"/><path d="M10 13.5H13" stroke="#000"/></svg>
<svg style="left:951px;top:426px" width="17" height="16" viewBox="0 0 17 16" shape-rendering="crispEdges"><rect x="0" y="0" width="16" height="15" fill="#fff"/><path d="M15.5 1V15M1 14.5H16" stroke="#a0a0a0"/><rect x="1.5" y="1.5" width="11" height="5" fill="#000" stroke="#777"/><path d="M2 6L4.5 3L7 6L9.5 3L12 6" fill="none" stroke="#0f0" stroke-width="1.2" shape-rendering="auto"/><path d="M13 8H14V9H15V10H14V11H13V10H12V9H13Z" fill="#000"/><rect x="13" y="9" width="1" height="1" fill="#fff"/><path d="M13 11H14V12H15V13H14V14H13V13H12V12H13Z" fill="#000"/><rect x="13" y="12" width="1" height="1" fill="#fff"/><path d="M1.5 14V10.5L2.5 9.5H4.5L5.5 10.5V14M1.5 12H5.5M11.5 9.5H8.5L7.5 10.5V13L8.5 14H11.5V12H10" fill="none" stroke="#00f" stroke-width="1.2"/></svg>
<svg style="left:951px;top:448px" width="17" height="16" viewBox="0 0 17 16" shape-rendering="crispEdges"><rect x="0" y="0" width="16" height="15" fill="#fff"/><path d="M15.5 1V15M1 14.5H16" stroke="#a0a0a0"/><path d="M1.5 6V1.5H6" stroke="#000" fill="none" stroke-width="1.2"/><path d="M5 7L11 1" stroke="#00f" stroke-width="1.2" shape-rendering="auto"/><path d="M13 2H14V3H15V4H14V5H13V4H12V3H13Z" fill="#000"/><rect x="13" y="3" width="1" height="1" fill="#f00"/><path d="M13 5H14V6H15V7H14V8H13V7H12V6H13Z" fill="#000"/><rect x="13" y="6" width="1" height="1" fill="#fff"/><path d="M2 10V11M2 12.5V13.5" stroke="#000" stroke-width="1.2"/><rect x="7" y="8" width="2" height="1" fill="#00f"/><path d="M5.5 14V10.5L6.5 9.5H8.5L9.5 10.5V14M5.5 12H9.5M15 9.5H12.5L11.5 10.5V13L12.5 14H15V12H13.5" fill="none" stroke="#00f" stroke-width="1.2"/></svg>
<svg style="left:951px;top:470px" width="17" height="16" viewBox="0 0 17 16" shape-rendering="crispEdges"><rect x="0" y="0" width="16" height="15" fill="#fff"/><path d="M15.5 1V15M1 14.5H16" stroke="#a0a0a0"/><rect x="1.5" y="1.5" width="10" height="8" fill="#fff" stroke="#a0a0a0"/><path d="M2.5 5.5 L4.5 3 L6.5 5.5 L8.5 3 L10.5 5.5" fill="none" stroke="#00f" stroke-width="1.1" shape-rendering="auto"/><path d="M2.5 8.5 L4.5 6 L6.5 8.5 L8.5 6 L10.5 8.5" fill="none" stroke="#f00" stroke-width="1.1" shape-rendering="auto"/><path d="M12 3.5H15M13.5 2V5" stroke="#f00" stroke-width="1.5"/><path d="M13.5 6.5V9.5M12 8H15" stroke="#000"/><rect x="13" y="7.5" width="1" height="1" fill="#fff"/><path d="M3 12H4V13H5V14H4V15H3V14H2V13H3Z" fill="#000"/><rect x="3" y="13" width="1" height="1" fill="#000"/><path d="M5 12H6V13H7V14H6V15H5V14H4V13H5Z" fill="#000"/><rect x="5" y="13" width="1" height="1" fill="#f00"/><path d="M7.5 14V10.5L8.5 9.5H9.5L10.5 10.5V14M7.5 12H10.5M15 9.5H12.5L11.5 10.5V13L12.5 14H15V12H14" fill="none" stroke="#00f" stroke-width="1.2"/></svg>
<svg style="left:951px;top:492px" width="17" height="16" viewBox="0 0 17 16" shape-rendering="crispEdges"><rect x="0" y="0" width="16" height="15" fill="#fff"/><path d="M15.5 1V15M1 14.5H16" stroke="#a0a0a0"/><rect x="1.5" y="1.5" width="10" height="8" fill="#fff" stroke="#a0a0a0"/><path d="M2.5 5.5 L4.5 3 L6.5 5.5 L8.5 3 L10.5 5.5" fill="none" stroke="#00f" stroke-width="1.1" shape-rendering="auto"/><path d="M2.5 8.5 L4.5 6 L6.5 8.5 L8.5 6 L10.5 8.5" fill="none" stroke="#f00" stroke-width="1.1" shape-rendering="auto"/><path d="M12 3.5H15M13.5 2V5" stroke="#f00" stroke-width="1.5"/><path d="M13.5 6.5V9.5M12 8H15" stroke="#000"/><rect x="13" y="7.5" width="1" height="1" fill="#fff"/><path d="M3 12H4V13H5V14H4V15H3V14H2V13H3Z" fill="#000"/><rect x="3" y="13" width="1" height="1" fill="#000"/><path d="M5 12H6V13H7V14H6V15H5V14H4V13H5Z" fill="#000"/><rect x="5" y="13" width="1" height="1" fill="#00f"/><path d="M8 11.5H11M9.5 11.5V14.5M12 11V14.5M12 13L14.5 11M12.5 12.5L14.5 14.5" fill="none" stroke="#ee0" stroke-width="1.3"/></svg>
<div class="a" style="left:947px;top:514px;width:23px;height:1px;background:#a0a0a0;"></div>
<svg style="left:951px;top:522px" width="16" height="15" viewBox="0 0 16 15" shape-rendering="crispEdges"><path d="M1 1.5H5.5L4.5 2.5L7.5 5.5H14C15 5.5 15.5 6 15.5 7V13C15.5 14 15 14.5 14 14.5H2C1 14.5 0.5 14 0.5 13V7C0.5 6 1 5.5 2 5.5H3.5L1.5 3.5L0.5 4.5Z" fill="#ff0" stroke="#999" shape-rendering="auto"/><path d="M2.5 8.5L3.5 7.5V12.5M2.5 12.5H4.5M5.5 12H6.5M9.5 12.5V7.5L7 10.5H10.5M11.5 8V10L12.5 12.5L13.5 10V8" fill="none" stroke="#000" stroke-width="1.1"/></svg>
<svg style="left:958px;top:543px" width="4" height="6" viewBox="0 0 4 6" shape-rendering="crispEdges"><path d="M0 0L4 3L0 6Z" fill="#000"/></svg>
<svg style="left:950px;top:557px" width="18" height="15" viewBox="0 0 18 15" shape-rendering="crispEdges"><rect x="2" y="0.5" width="14" height="14" fill="#000"/><path d="M2 0.5H16M2 14.5H16" stroke="#777" stroke-dasharray="1 1"/><path d="M4.5 2V13M7.5 2V13M10.5 2V13M13.5 2V13" stroke="#088"/><path d="M5.5 2.5L13 7.5L5.5 12.5Z" fill="#ff0" stroke="#000"/><path d="M8 6L9.5 7.5L8 9L6.5 7.5Z" fill="#000"/><path d="M0 5.5H5M12 7.5H18" stroke="#f00" stroke-width="1.2"/><path d="M0 9.5H5" stroke="#00f" stroke-width="1.2"/></svg>
<svg style="left:958px;top:577px" width="4" height="6" viewBox="0 0 4 6" shape-rendering="crispEdges"><path d="M0 0L4 3L0 6Z" fill="#000"/></svg>
<svg style="left:951px;top:589px" width="16" height="15" viewBox="0 0 16 15" shape-rendering="crispEdges"><ellipse cx="5" cy="8" rx="3.6" ry="5.2" transform="rotate(30 5 8)" fill="#fff" stroke="#800" stroke-width="2.4" shape-rendering="auto"/><path d="M8 4L10 2H12M9 8L15 2M9 8L11 10H14M10 3L15 0" fill="none" stroke="#000" stroke-width="1.4" shape-rendering="auto"/></svg>
<div class="a" style="left:400px;top:68px;width:268px;height:570px;background:#f0f0f0;border-top:1px solid #e3e3e3;border-left:1px solid #e3e3e3;border-right:1px solid #696969;box-shadow:inset 1px 1px 0 #fff,inset -1px 0 0 #a0a0a0"></div>
<div class="ck" style="top:72px"></div>
<svg style="left:409px;top:78px" width="9" height="8" viewBox="0 0 9 8" shape-rendering="crispEdges"><path d="M1 3.5L3.5 6.5L8 1" fill="none" stroke="#000" stroke-width="1.6" shape-rendering="auto"/></svg>
<div class="mi" style="top:76px">Стандартная</div>
<div class="mi" style="top:98px">Вид</div>
<div class="ck" style="top:116px"></div>
<svg style="left:409px;top:122px" width="9" height="8" viewBox="0 0 9 8" shape-rendering="crispEdges"><path d="M1 3.5L3.5 6.5L8 1" fill="none" stroke="#000" stroke-width="1.6" shape-rendering="auto"/></svg>
<div class="mi" style="top:120px">Главная</div>
<div class="mi" style="top:142px">Рисование</div>
<div class="mi" style="top:164px">Виртуальные аналоговые компоненты</div>
<div class="mi" style="top:186px">Виртуальные пассивные компоненты</div>
<div class="mi" style="top:208px">Виртуальные диоды</div>
<div class="mi" style="top:230px">Виртуальные транзисторы</div>
<div class="mi" style="top:252px">Виртуальные измерительные компоненты</div>
<div class="mi" style="top:274px">Виртуальные смешанные компоненты</div>
<div class="ck" style="top:292px"></div>
<svg style="left:409px;top:298px" width="9" height="8" viewBox="0 0 9 8" shape-rendering="crispEdges"><path d="M1 3.5L3.5 6.5L8 1" fill="none" stroke="#000" stroke-width="1.6" shape-rendering="auto"/></svg>
<div class="mi" style="top:296px">Реальные компоненты</div>
<div class="mi" style="top:318px">Виртуальные источники</div>
<div class="mi" style="top:340px">Виртуальные компоненты с ограничениями</div>
<div class="mi" style="top:362px">Виртуальные источники сигналов</div>
<div class="ck" style="top:380px"></div>
<svg style="left:409px;top:386px" width="9" height="8" viewBox="0 0 9 8" shape-rendering="crispEdges"><path d="M1 3.5L3.5 6.5L8 1" fill="none" stroke="#000" stroke-width="1.6" shape-rendering="auto"/></svg>
<div class="mi" style="top:384px">Виртуальные</div>
<div class="ck" style="top:402px"></div>
<svg style="left:409px;top:408px" width="9" height="8" viewBox="0 0 9 8" shape-rendering="crispEdges"><path d="M1 3.5L3.5 6.5L8 1" fill="none" stroke="#000" stroke-width="1.6" shape-rendering="auto"/></svg>
<div class="mi" style="top:406px">Выключатель моделирования</div>
<div class="ck" style="top:424px"></div>
<svg style="left:409px;top:430px" width="9" height="8" viewBox="0 0 9 8" shape-rendering="crispEdges"><path d="M1 3.5L3.5 6.5L8 1" fill="none" stroke="#000" stroke-width="1.6" shape-rendering="auto"/></svg>
<div class="mi" style="top:428px">Моделирование</div>
<div class="ck" style="top:446px"></div>
<svg style="left:409px;top:452px" width="9" height="8" viewBox="0 0 9 8" shape-rendering="crispEdges"><path d="M1 3.5L3.5 6.5L8 1" fill="none" stroke="#000" stroke-width="1.6" shape-rendering="auto"/></svg>
<div class="mi" style="top:450px">Приборы</div>
<div class="mi" style="top:472px">Панель редактора</div>
<div class="mi" style="top:494px">MCU</div>
<div class="mi" style="top:516px">Приборы LabVIEW</div>
<div class="a" style="left:413px;top:536px;width:243px;height:1px;background:#a0a0a0;"></div>
<div class="a" style="left:413px;top:537px;width:243px;height:1px;background:#fff;"></div>
<svg style="left:405px;top:544px" width="18" height="16" viewBox="0 0 18 16" shape-rendering="crispEdges"><rect x="1" y="0" width="16" height="15" fill="none" stroke="#e0e0e0" stroke-dasharray="1 1"/><path d="M2.5 1V13M2.5 1.5H15.5" fill="none" stroke="#000" stroke-width="1.1"/><path d="M3.5 2L6.5 6L9.5 2" fill="none" stroke="#000" stroke-width="1.2" shape-rendering="auto"/><path d="M9.5 14.5V10L12.5 7L15.5 10V14.5Z" fill="#fff" stroke="#000" stroke-width="1.1"/><path d="M9 8H10M16 8H17" stroke="#000"/></svg>
<div class="mi" style="top:546px"><u>К</u>оординатные поля</div>
<svg style="left:406px;top:566px" width="16" height="15" viewBox="0 0 16 15" shape-rendering="crispEdges"><rect x="0" y="1" width="15" height="13" fill="#ebebeb"/><path d="M0 0.5H15M0 14.5H15M6.5 3V10M6.5 3.5H15" stroke="#b4b4b4"/><path d="M1 3.5H4" stroke="#c8c8c8"/></svg>
<div class="mi" style="top:568px">Строка состояния</div>
<div class="a" style="left:413px;top:588px;width:243px;height:1px;background:#a0a0a0;"></div>
<div class="a" style="left:413px;top:589px;width:243px;height:1px;background:#fff;"></div>
<div class="mi" style="top:598px">Панель разработки</div>
<div class="mi" style="top:620px">Блок информации</div>
<svg style="left:0;top:0" width="970" height="633" viewBox="0 0 970 633">
<rect x="13.1" y="55.9" width="378.6" height="18.9" rx="9.45" fill="none" stroke="#00ffff" stroke-width="2.3"/>
<rect x="449" y="54" width="314.7" height="22.8" rx="11.4" fill="none" stroke="#a6d2ff" stroke-width="1.9"/>
<path d="M236.3 74C232.3 290.7 261.7 299.7 393 303.2" fill="none" stroke="#00ffff" stroke-width="2"/>
<path d="M392 298L402 303.2L392 308.3Z" fill="#00ffff"/>
<rect x="402.6" y="289.9" width="142.4" height="23.5" rx="11" fill="none" stroke="#00ffff" stroke-width="2.5"/>
<path d="M709.5 77C707.1 347.6 709.9 388.7 513 391.2" fill="none" stroke="#a6d2ff" stroke-width="1.8"/>
<path d="M514 386.7L505 391.3L514 396Z" fill="#a6d2ff"/>
<rect x="403.2" y="378.7" width="100.3" height="24.3" rx="11" fill="none" stroke="#a6d2ff" stroke-width="2.5"/>
</svg>
</body></html>
